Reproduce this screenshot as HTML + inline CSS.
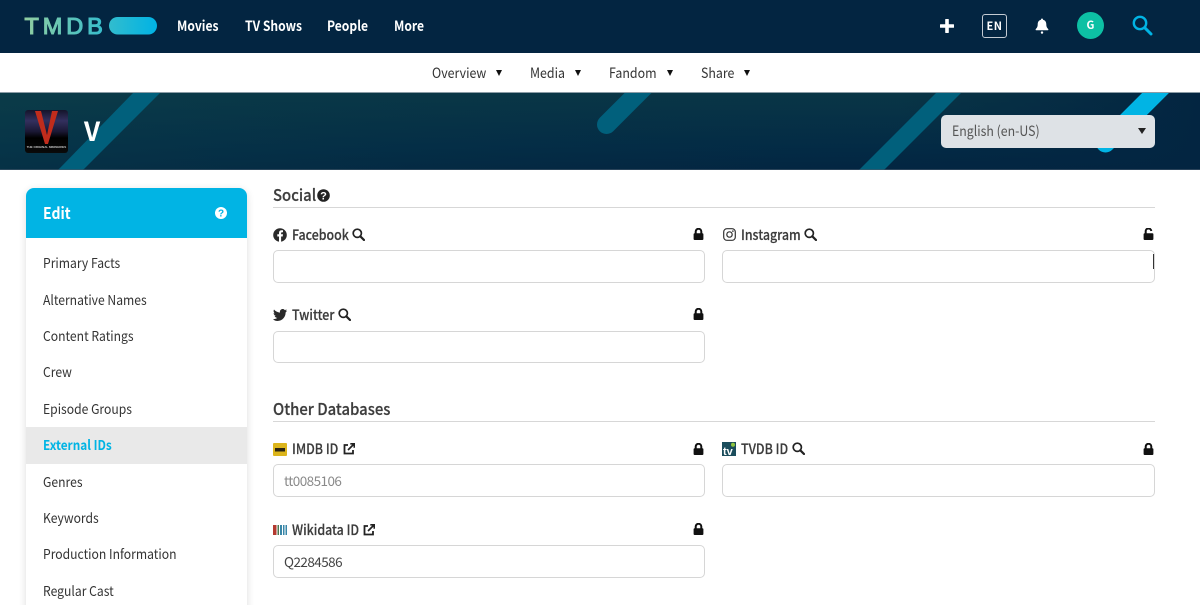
<!DOCTYPE html>
<html lang="en"><head><meta charset="utf-8"><title>TMDB Edit</title>
<style>
html,body{margin:0;padding:0;width:1200px;height:605px;overflow:hidden;background:#fff}
body{font-family:"Noto Sans CJK JP","Liberation Sans",sans-serif;color:#212529;position:relative}
.a{position:absolute;white-space:nowrap;line-height:20px;transform-origin:left center}
.nav{color:#fff;font-weight:700;font-size:14px;top:16px;transform:scaleX(.865)}
.sub{font-size:14px;top:63px;color:#333;transform:scaleX(.885)}
.tri{position:absolute;width:0;height:0;border-left:3.5px solid transparent;border-right:3.5px solid transparent;border-top:6px solid #111;top:70px}
.side{left:43px;font-size:13.5px;color:#333;transform:scaleX(.9)}
.h{font-size:16px;font-weight:500;color:#3d3d3d;left:273px;transform:scaleX(.93);-webkit-text-stroke:.2px #3d3d3d}
.hr{position:absolute;left:273px;width:882px;height:1px;background:#d7d7d7}
.l{font-size:14px;font-weight:500;color:#3c3c3c;transform:scaleX(.885);-webkit-text-stroke:.2px #3c3c3c}
.in{position:absolute;box-sizing:border-box;width:432px;height:33px;border:1px solid #d6d6d6;border-radius:5px;background:#fff;font-size:13.5px;line-height:30px;padding-left:10px;letter-spacing:-.55px}
svg{position:absolute;display:block}
</style></head><body>
<div style="position:absolute;left:0;top:0;width:1200px;height:53px;background:#032541"></div>
<svg style="left:0;top:0" width="165" height="53"><defs><linearGradient id="g" x1="25" x2="157" y1="0" y2="0" gradientUnits="userSpaceOnUse"><stop offset="0" stop-color="#90cea1"/><stop offset=".56" stop-color="#3cbec9"/><stop offset="1" stop-color="#00b3e5"/></linearGradient></defs>
<text x="24.500" y="34" font-family="Liberation Sans" font-size="23.500" font-weight="400" letter-spacing="3.900" fill="url(#g)" stroke="url(#g)" stroke-width="1.100">TMDB</text>
<rect x="109" y="17" width="48" height="17.500" rx="8.700" fill="url(#g)"/></svg>
<div class="a nav" style="left:177px">Movies</div>
<div class="a nav" style="left:245px">TV Shows</div>
<div class="a nav" style="left:327px">People</div>
<div class="a nav" style="left:394px">More</div>
<svg style="left:940px;top:19px" width="14" height="14"><path d="M7 1v12M1 7h12" stroke="#fff" stroke-width="3.600" stroke-linecap="round"/></svg>
<div class="a" style="left:982px;top:14px;width:23px;height:22px;border:1px solid #c4cbd3;border-radius:3px;color:#fff;font-size:11px;font-weight:700;text-align:center;line-height:22px;letter-spacing:.5px">EN</div>
<svg style="left:1035px;top:18px" width="14" height="16" viewBox="0 0 14 16"><path d="M7 0.500c.7 0 1 .5 1 1.200 2.300.5 3.300 2.300 3.300 4.600 0 3 1 3.700 2 4.900.3.500 0 1-.5 1H1.200c-.5 0-.8-.5-.5-1 1-1.200 2-1.900 2-4.900 0-2.300 1-4.100 3.300-4.600 0-.7.300-1.200 1-1.200z" fill="#fff"/><circle cx="7" cy="14.600" r="1.200" fill="#fff"/></svg>
<div class="a" style="left:1077px;top:12px;width:27px;height:27px;border-radius:50%;background:#0dc0a4;color:#fff;font-size:11px;font-weight:700;text-align:center;line-height:27px">G</div>
<svg style="left:1132px;top:15px" width="21" height="21"><circle cx="8" cy="8" r="6.200" fill="none" stroke="#01b4e4" stroke-width="2.400"/><path d="M12.700 12.700L19 19" stroke="#01b4e4" stroke-width="3" stroke-linecap="round"/></svg>

<div class="a sub" style="left:432px">Overview</div><div class="tri" style="left:496px"></div>
<div class="a sub" style="left:530px">Media</div><div class="tri" style="left:575px"></div>
<div class="a sub" style="left:609px">Fandom</div><div class="tri" style="left:667px"></div>
<div class="a sub" style="left:701px">Share</div><div class="tri" style="left:744px"></div>

<svg style="left:0;top:92px" width="1200" height="78" viewBox="0 92 1200 78">
<defs><linearGradient id="b" x1="0" x2="0" y1="93" y2="170" gradientUnits="userSpaceOnUse"><stop offset="0" stop-color="#0b3a47"/><stop offset=".7" stop-color="#032c46"/><stop offset="1" stop-color="#032541"/></linearGradient>
<linearGradient id="b2" x1="0" x2="1200" y1="0" y2="0" gradientUnits="userSpaceOnUse"><stop offset="0" stop-color="#0a3d4a" stop-opacity=".5"/><stop offset=".75" stop-color="#032541" stop-opacity=".2"/><stop offset="1" stop-color="#032541"/></linearGradient></defs>
<rect x="0" y="92" width="1200" height="78" fill="url(#b)"/><rect x="0" y="92" width="1200" height="78" fill="url(#b2)"/>
<path d="M133 93h27L83 170H58z" fill="#01607c"/>
<path d="M650 81L606.500 124.500" stroke="#01607c" stroke-width="19" stroke-linecap="round"/>
<path d="M936 93h25l-77 77h-25z" fill="#01607c"/>
<path d="M1170 78.500L1105.500 143" stroke="#01b4e4" stroke-width="19" stroke-linecap="round"/>
<rect x="0" y="92" width="1200" height="1" fill="#8b9ca6"/><rect x="0" y="169" width="1200" height="1" fill="#44596a" opacity=".6"/>
</svg>
<svg style="left:25px;top:110px" width="43" height="43" viewBox="0 0 43 43"><defs><linearGradient id="p" x1="0" x2="0" y1="0" y2="1"><stop offset="0" stop-color="#14142a"/><stop offset=".25" stop-color="#33305e"/><stop offset=".5" stop-color="#1a1834"/><stop offset=".65" stop-color="#000"/><stop offset="1" stop-color="#0a0a0a"/></linearGradient></defs><rect width="43" height="43" rx="3" fill="url(#p)"/><path d="M10 1h6l6 24 5-24h6L23 34h-3z" fill="#c12c1c"/><text x="21.500" y="38" text-anchor="middle" font-size="3" font-weight="700" font-family="Liberation Sans" fill="#c4c4c4">THE ORIGINAL MINISERIES</text></svg>
<div class="a" style="left:84px;top:117px;color:#fff;font-size:26px;font-weight:700;line-height:28px">V</div>
<div style="position:absolute;left:941px;top:115px;width:214px;height:33px;background:#dee2e6;border-radius:5px"></div>
<div class="a" style="left:952px;top:121px;color:#555;font-size:14px;transform:scaleX(.88)">English (en-US)</div>
<div class="tri" style="left:1138px;top:128px;border-left-width:4px;border-right-width:4px;border-top-color:#222"></div>

<div style="position:absolute;left:26px;top:188px;width:221px;height:430px;border-radius:8px 8px 0 0;background:#fff;box-shadow:0 2px 8px rgba(0,0,0,.14)"></div>
<div style="position:absolute;left:26px;top:188px;width:221px;height:50px;border-radius:8px 8px 0 0;background:#01b4e4"></div>
<div class="a" style="left:43px;top:202px;color:#fff;font-size:16px;font-weight:700;transform:scaleX(.875)">Edit</div>
<svg style="left:215px;top:207px" width="12" height="12"><circle cx="6" cy="6" r="6" fill="#fff"/><text x="6" y="9.500" text-anchor="middle" font-size="10" font-weight="700" font-family="Liberation Sans" fill="#01b4e4">?</text></svg>
<div style="position:absolute;left:26px;top:427px;width:221px;height:37px;background:#e9e9e9"></div>
<div class="a side" style="top:252px">Primary Facts</div>
<div class="a side" style="top:289px">Alternative Names</div>
<div class="a side" style="top:325px">Content Ratings</div>
<div class="a side" style="top:361px">Crew</div>
<div class="a side" style="top:398px">Episode Groups</div>
<div class="a side" style="top:434px;color:#01b4e4;font-weight:700;transform:scaleX(.873)">External IDs</div>
<div class="a side" style="top:471px">Genres</div>
<div class="a side" style="top:507px">Keywords</div>
<div class="a side" style="top:543px">Production Information</div>
<div class="a side" style="top:580px">Regular Cast</div>

<div class="a h" style="top:184px">Social</div>
<svg style="left:317px;top:189px" width="13" height="13"><circle cx="6.500" cy="6.500" r="6.300" fill="#222"/><text x="6.500" y="10.500" text-anchor="middle" font-size="11" font-weight="700" font-family="Liberation Sans" fill="#fff">?</text></svg>
<div class="hr" style="top:207px"></div>
<div class="a h" style="top:398px">Other Databases</div>
<div class="hr" style="top:421px"></div>

<svg style="left:273px;top:228px" width="14" height="14"><circle cx="7" cy="7" r="6.800" fill="#2a2a2a"/><path d="M6 14V8.500H4.300V6.300H6V5c0-1.800 1-2.700 2.600-2.700h1.400v2H9c-.7 0-.9.400-.9 1v1h1.900l-.3 2.200H8.100V14z" fill="#fff"/></svg>
<div class="a l" style="left:292px;top:225px">Facebook</div>
<svg style="left:352px;top:228px" width="13" height="13"><circle cx="5.300" cy="5.300" r="4.100" fill="none" stroke="#222" stroke-width="1.700"/><path d="M8.300 8.300L12 12" stroke="#222" stroke-width="2.200" stroke-linecap="round"/></svg>
<svg style="left:723px;top:228px" width="13" height="13"><rect x=".7" y=".7" width="11.600" height="11.600" rx="3.200" fill="none" stroke="#333" stroke-width="1.200"/><circle cx="6.500" cy="6.500" r="2.700" fill="none" stroke="#333" stroke-width="1.200"/><circle cx="9.900" cy="3.100" r=".8" fill="#333"/></svg>
<div class="a l" style="left:741px;top:225px">Instagram</div>
<svg style="left:804px;top:228px" width="13" height="13"><circle cx="5.300" cy="5.300" r="4.100" fill="none" stroke="#222" stroke-width="1.700"/><path d="M8.300 8.300L12 12" stroke="#222" stroke-width="2.200" stroke-linecap="round"/></svg>
<svg style="left:273px;top:309px" width="14" height="12" viewBox="0 0 14 12"><path d="M14 1.500c-.5.200-1 .4-1.600.5.600-.4 1-.9 1.200-1.600-.5.300-1.100.6-1.800.7C11.200.3 10.500 0 9.700 0 8.100 0 6.900 1.300 6.900 2.900c0 .2 0 .4.100.7C4.600 3.400 2.500 2.300 1 .5.800 1 .600 1.400.6 2c0 1 .5 1.900 1.300 2.400-.5 0-.9-.1-1.300-.4 0 1.400 1 2.600 2.300 2.900-.4.100-.8.100-1.300 0 .4 1.100 1.400 2 2.700 2-1 .8-2.600 1.400-4.300 1.200C1.300 11.500 2.900 12 4.400 12c5.300 0 8.200-4.400 8.200-8.200v-.4c.6-.4 1-.9 1.400-1.900z" fill="#2a2a2a"/></svg>
<div class="a l" style="left:292px;top:305px">Twitter</div>
<svg style="left:338px;top:308px" width="13" height="13"><circle cx="5.300" cy="5.300" r="4.100" fill="none" stroke="#222" stroke-width="1.700"/><path d="M8.300 8.300L12 12" stroke="#222" stroke-width="2.200" stroke-linecap="round"/></svg>

<svg style="left:273px;top:443px" width="14" height="13"><rect width="14" height="13" rx="1" fill="#dcb51c"/><rect x="2" y="5" width="10" height="3.500" fill="#2a2412"/></svg>
<div class="a l" style="left:292px;top:439px">IMDB ID</div>
<svg style="left:343px;top:443px" width="12" height="12"><path d="M5 2H1.500v8.500H10V7" fill="none" stroke="#222" stroke-width="1.800"/><path d="M5 7l6-6M7.300 .8h4v4" fill="none" stroke="#222" stroke-width="1.700"/></svg>
<svg style="left:722px;top:442px" width="14" height="14"><rect width="14" height="14" fill="#1b4d5c"/><text x="1" y="13" font-size="11" font-weight="700" font-family="Liberation Sans" fill="#fff">tv</text><circle cx="11" cy="2.800" r="2" fill="#8fc63f"/></svg>
<div class="a l" style="left:741px;top:439px">TVDB ID</div>
<svg style="left:792px;top:442px" width="13" height="13"><circle cx="5.300" cy="5.300" r="4.100" fill="none" stroke="#222" stroke-width="1.700"/><path d="M8.300 8.300L12 12" stroke="#222" stroke-width="2.200" stroke-linecap="round"/></svg>
<svg style="left:273px;top:525px" width="14" height="10"><rect x="0" width="3.500" height="10" fill="#b33a30"/><rect x="4.500" width="1.500" height="10" fill="#4a7a50"/><rect x="7" width="2" height="10" fill="#3a87a8"/><rect x="10" width="1.500" height="10" fill="#3a87a8"/><rect x="12.500" width="1.500" height="10" fill="#3a87a8"/></svg>
<div class="a l" style="left:292px;top:520px">Wikidata ID</div>
<svg style="left:363px;top:524px" width="12" height="12"><path d="M5 2H1.500v8.500H10V7" fill="none" stroke="#222" stroke-width="1.800"/><path d="M5 7l6-6M7.300 .8h4v4" fill="none" stroke="#222" stroke-width="1.700"/></svg>

<svg style="left:693px;top:228px" width="11" height="12"><path d="M2.700 6V3.600a2.800 2.800 0 0 1 5.600 0V6" fill="none" stroke="#111" stroke-width="2"/><rect x=".6" y="5.200" width="9.800" height="6.800" rx="1" fill="#111"/></svg>
<svg style="left:1143px;top:228px" width="11" height="12"><path d="M2.700 6V3.600a2.800 2.800 0 0 1 5.600-.6" fill="none" stroke="#111" stroke-width="2"/><rect x=".6" y="5.200" width="9.800" height="6.800" rx="1" fill="#111"/></svg>
<svg style="left:693px;top:308px" width="11" height="12"><path d="M2.700 6V3.600a2.800 2.800 0 0 1 5.600 0V6" fill="none" stroke="#111" stroke-width="2"/><rect x=".6" y="5.200" width="9.800" height="6.800" rx="1" fill="#111"/></svg>
<svg style="left:693px;top:443px" width="11" height="12"><path d="M2.700 6V3.600a2.800 2.800 0 0 1 5.600 0V6" fill="none" stroke="#111" stroke-width="2"/><rect x=".6" y="5.200" width="9.800" height="6.800" rx="1" fill="#111"/></svg>
<svg style="left:1143px;top:443px" width="11" height="12"><path d="M2.700 6V3.600a2.800 2.800 0 0 1 5.600 0V6" fill="none" stroke="#111" stroke-width="2"/><rect x=".6" y="5.200" width="9.800" height="6.800" rx="1" fill="#111"/></svg>
<svg style="left:693px;top:523px" width="11" height="12"><path d="M2.700 6V3.600a2.800 2.800 0 0 1 5.600 0V6" fill="none" stroke="#111" stroke-width="2"/><rect x=".6" y="5.200" width="9.800" height="6.800" rx="1" fill="#111"/></svg>

<div class="in" style="left:273px;top:250px"></div>
<div class="in" style="left:722px;top:250px;width:433px"></div>
<div style="position:absolute;left:1153px;top:254px;width:1px;height:15px;background:#333"></div>
<div class="in" style="left:273px;top:331px;height:32px"></div>
<div class="in" style="left:273px;top:464px;color:#8a8a8a">tt0085106</div>
<div class="in" style="left:722px;top:464px;width:433px"></div>
<div class="in" style="left:273px;top:545px;color:#444">Q2284586</div>
</body></html>
